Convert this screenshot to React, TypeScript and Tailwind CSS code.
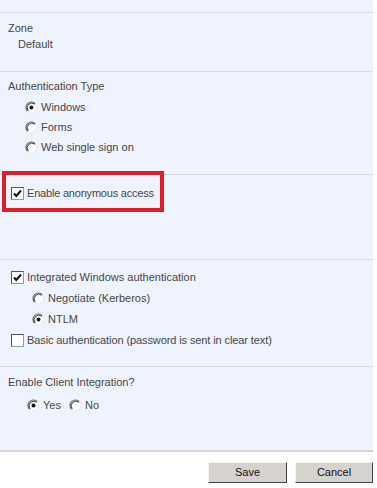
import React from 'react';

const Check = ({ checked }: { checked?: boolean }) => (
  <span className="inline-flex w-[13px] h-[13px] shrink-0 items-center justify-center border border-t-[#555] border-l-[#555] border-r-[#999] border-b-[#999] bg-white">
    {checked && (
      <svg width="9" height="9" viewBox="0 0 9 9">
        <path d="M1 4.5 L3.3 7 L8 1.5" stroke="#111" strokeWidth="2" fill="none" />
      </svg>
    )}
  </span>
);

const Radio = ({ checked }: { checked?: boolean }) => (
  <svg width="13" height="13" viewBox="0 0 13 13" className="shrink-0">
    <circle cx="6.5" cy="6.5" r="5.5" fill="#fff" />
    <path d="M10.4 2.6 A5.5 5.5 0 0 0 2.6 10.4" stroke="#666" strokeWidth="1.2" fill="none" />
    <path d="M9.8 3.2 A4.7 4.7 0 0 0 3.2 9.8" stroke="#222" strokeWidth="0.9" fill="none" />
    <path d="M2.6 10.4 A5.5 5.5 0 0 0 10.4 2.6" stroke="#e8e8e8" strokeWidth="1.2" fill="none" />
    {checked && <circle cx="6.5" cy="6.5" r="2" fill="#111" />}
  </svg>
);

const Line = () => <div className="h-px bg-[#d5d9e6]" />;

export default function App() {
  return (
    <div className="relative w-[377px] h-[488px] bg-white text-[11px] text-[#474747] font-['Liberation_Sans',Arial,sans-serif]">
      <div className="w-[373px] h-[452px] bg-[#eff3fd] border-b-2 border-[#d3d3d3] flex flex-col">
        <div className="h-[12px]" />
        <Line />

        {/* Zone */}
        <div className="h-[58px] px-2 pt-[7px] leading-[16px]">
          <div>Zone</div>
          <div className="pl-[10px]">Default</div>
        </div>
        <Line />

        {/* Authentication Type */}
        <div className="h-[102px] px-2 pt-[4px] leading-[20px]">
          <div className="mb-[1px]">Authentication Type</div>
          <div className="pl-[17px] flex flex-col">
            <label className="flex items-center gap-[3px]"><Radio checked />Windows</label>
            <label className="flex items-center gap-[3px]"><Radio />Forms</label>
            <label className="flex items-center gap-[3px]"><Radio />Web single sign on</label>
          </div>
        </div>
        <Line />

        {/* Anonymous */}
        <div className="h-[84px] pl-[11px] pt-[11px]">
          <label className="flex items-center gap-[3px] leading-[14px] tracking-[-0.2px]"><Check checked />Enable anonymous access</label>
        </div>
        <Line />

        {/* Windows auth */}
        <div className="h-[106px] pl-[11px] pt-[7px] leading-[21px]">
          <label className="flex items-center gap-[3px]"><Check checked />Integrated Windows authentication</label>
          <div className="pl-[21px] flex flex-col">
            <label className="flex items-center gap-[3px]"><Radio />Negotiate (Kerberos)</label>
            <label className="flex items-center gap-[3px]"><Radio checked />NTLM</label>
          </div>
          <label className="flex items-center gap-[3px] tracking-[-0.1px]"><Check />Basic authentication (password is sent in clear text)</label>
        </div>
        <Line />

        {/* Client integration */}
        <div className="flex-1 px-2 pt-[7px]">
          <div className="leading-[16px]">Enable Client Integration?</div>
          <div className="pl-[19px] mt-[7px] flex items-center gap-[8px] leading-[16px]">
            <label className="flex items-center gap-[3px]"><Radio checked />Yes</label>
            <label className="flex items-center gap-[3px]"><Radio />No</label>
          </div>
        </div>
      </div>

      {/* Buttons */}
      <div className="flex justify-end gap-[8px] pr-[4px] pt-[10px]">
        <button className="w-[79px] h-[21px] bg-[#d6d3ce] text-[#111] border border-t-[#f4f4f4] border-l-[#f4f4f4] border-r-[#444] border-b-[#444]">Save</button>
        <button className="w-[78px] h-[21px] bg-[#d6d3ce] text-[#111] border border-t-[#f4f4f4] border-l-[#f4f4f4] border-r-[#444] border-b-[#444]">Cancel</button>
      </div>

      {/* Highlight */}
      <div className="absolute left-[2px] top-[171px] w-[162px] h-[41px] border-4 border-[#dc1f2b]" />
    </div>
  );
}
